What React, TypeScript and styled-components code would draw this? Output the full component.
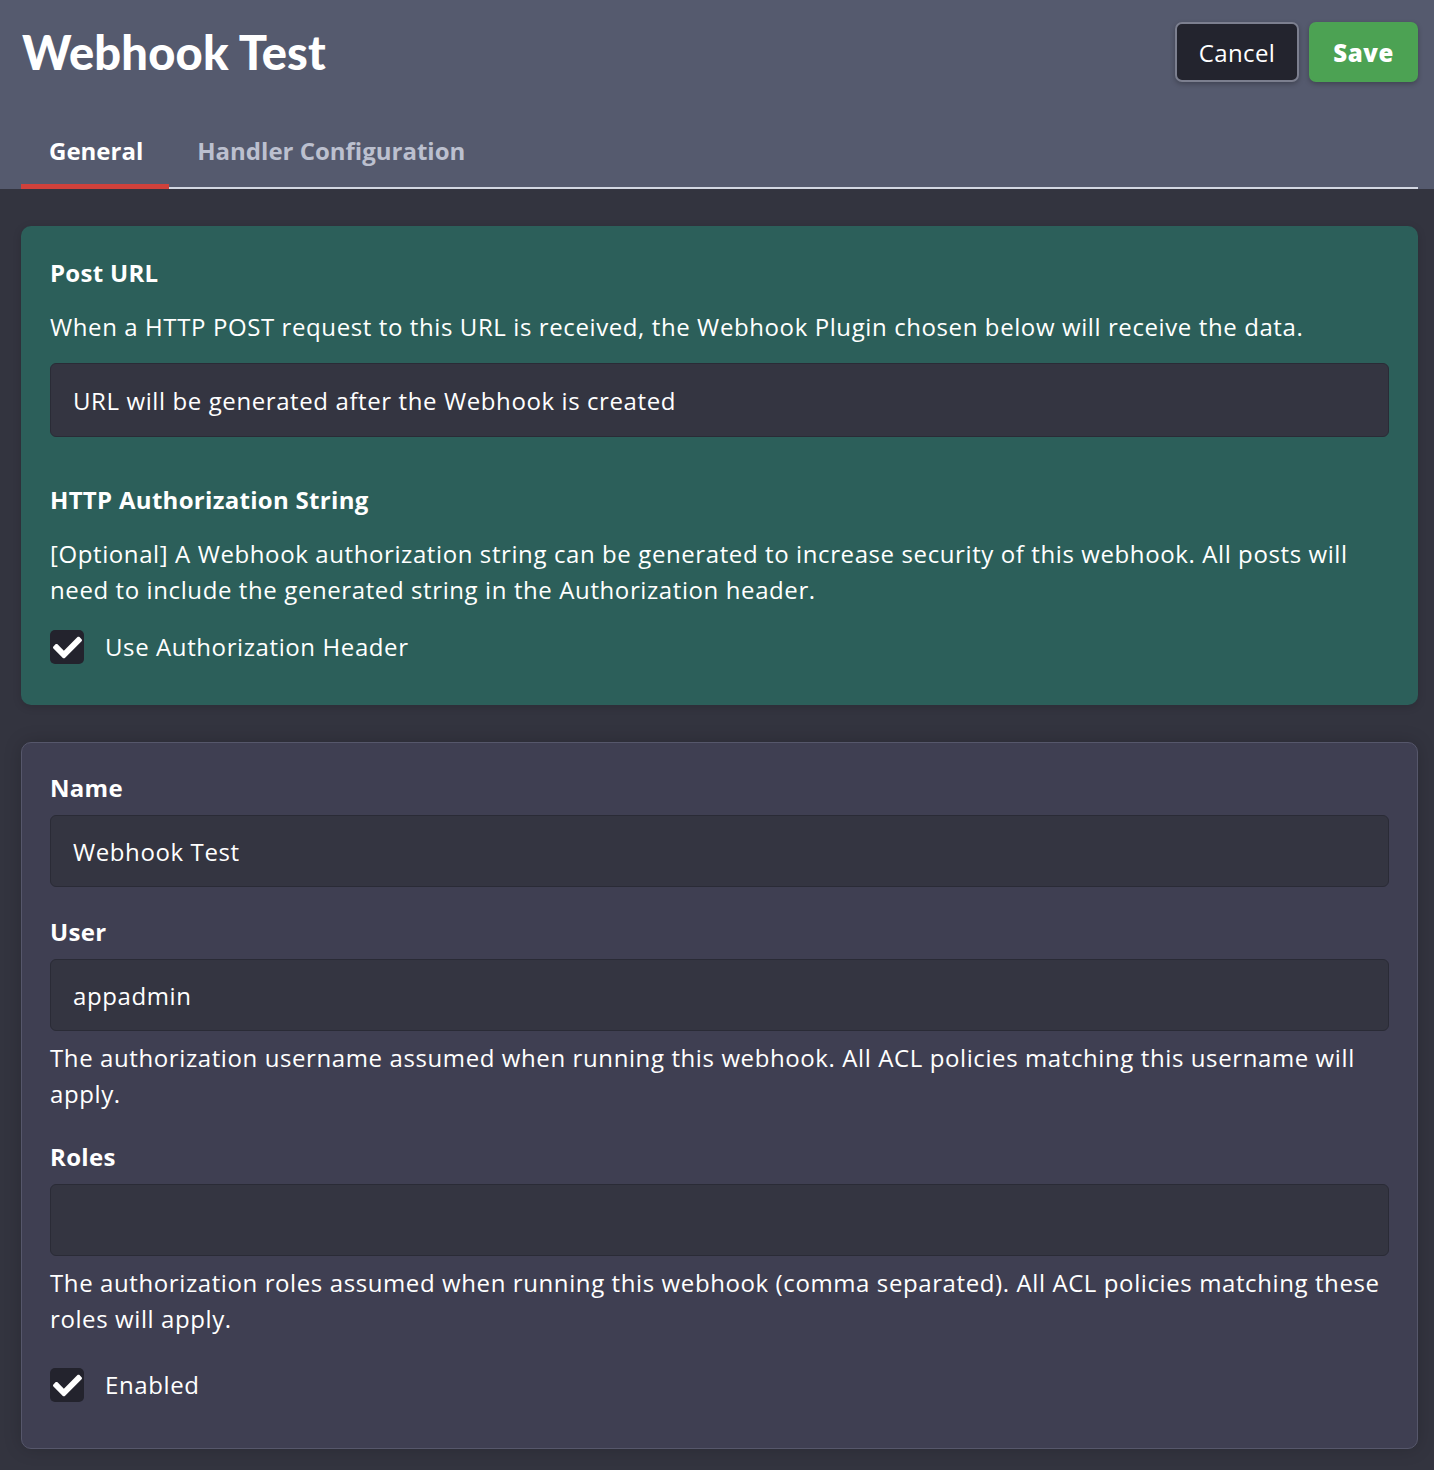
import React from "react";
import styled, { createGlobalStyle } from "styled-components";
import { FaCheck } from "react-icons/fa";

const Global = createGlobalStyle`
  html, body { margin: 0; padding: 0; background: #33343f; }
  body { font-family: "Open Sans", "Noto Sans", sans-serif; color: #ffffff; }
  * { box-sizing: border-box; }
`;

const Page = styled.div`
  min-height: 1470px;
  background: #33343f;
`;

const Header = styled.header`
  background: #555a6e;
  padding: 22px 16px 0 21px;
`;

const TitleRow = styled.div`
  display: flex;
  align-items: center;
  justify-content: space-between;
`;

const Title = styled.h1`
  margin: 0;
  font-family: "Lato", sans-serif;
  font-weight: 900;
  font-size: 47px;
  line-height: 60px;
  letter-spacing: 0.2px;
  padding-left: 1px;
`;

const Actions = styled.div`
  display: flex;
  gap: 10px;
`;

const Button = styled.button<{ $primary?: boolean }>`
  height: 60px;
  border-radius: 7px;
  font-family: "Open Sans", sans-serif;
  font-size: 24px;
  letter-spacing: ${(p) => (p.$primary ? "0.6px" : "0.4px")};
  color: #ffffff;
  cursor: pointer;
  padding: 0 22px;
  font-weight: ${(p) => (p.$primary ? 800 : 400)};
  background: ${(p) => (p.$primary ? "#4ca253" : "#23242e")};
  border: 2px solid ${(p) => (p.$primary ? "#4ca253" : "#7c7f8f")};
  box-shadow: 0 2px 5px rgba(0, 0, 0, 0.25);
`;

const TabList = styled.div`
  display: flex;
  margin-top: 32px;
  border-bottom: 2px solid #d3d7e2;
`;

const Tab = styled.div<{ $active?: boolean }>`
  padding: 19px 26px 15px 28px;
  margin-bottom: -2px;
  font-size: 24px;
  line-height: 36px;
  font-weight: 700;
  color: ${(p) => (p.$active ? "#ffffff" : "#bcc0cf")};
  border-bottom: 5px solid ${(p) => (p.$active ? "#d0413b" : "transparent")};
`;

const Body = styled.main`
  padding: 37px 16px 22px 21px;
  display: flex;
  flex-direction: column;
  gap: 37px;
`;

const InfoCard = styled.section`
  background: #2c5f5a;
  border-radius: 10px;
  padding: 29px 29px 40px 29px;
  box-shadow: 0 2px 8px rgba(0, 0, 0, 0.15);
`;

const FormCard = styled.section`
  background: #3f3f52;
  border: 1px solid #56576b;
  border-radius: 10px;
  padding: 27px 28px 45px 28px;
  box-shadow: 0 0 18px rgba(0, 0, 0, 0.18);
`;

const Heading = styled.h3<{ $gap?: number }>`
  margin: ${(p) => p.$gap ?? 0}px 0 0 0;
  font-size: 24px;
  line-height: 36px;
  font-weight: 700;
  letter-spacing: 0.3px;
`;

const Text = styled.p<{ $gap?: number }>`
  margin: ${(p) => p.$gap ?? 0}px 0 0 0;
  font-size: 24px;
  line-height: 36px;
  font-weight: 400;
  letter-spacing: 0.6px;
`;

const Field = styled.div<{ $gap?: number; $h?: number }>`
  margin-top: ${(p) => p.$gap ?? 9}px;
  height: ${(p) => p.$h ?? 72}px;
  background: #343541;
  border: 1px solid #2a2b36;
  border-radius: 6px;
  padding: 0 22px;
  display: flex;
  align-items: center;
  font-size: 24px;
  letter-spacing: 0.6px;
`;

const CheckRow = styled.label<{ $gap?: number }>`
  margin-top: ${(p) => p.$gap ?? 0}px;
  display: flex;
  align-items: center;
  gap: 21px;
  font-size: 24px;
  line-height: 36px;
  letter-spacing: 0.6px;
`;

const Box = styled.span`
  width: 34px;
  height: 34px;
  border-radius: 5px;
  background: #23232d;
  display: flex;
  align-items: center;
  justify-content: center;
  color: #ffffff;
`;

const Check = ({ label, gap }: { label: string; gap: number }) => (
  <CheckRow $gap={gap}>
    <Box>
      <FaCheck size={29} />
    </Box>
    {label}
  </CheckRow>
);

export default function App() {
  return (
    <Page>
      <Global />
      <Header>
        <TitleRow>
          <Title>Webhook Test</Title>
          <Actions>
            <Button>Cancel</Button>
            <Button $primary>Save</Button>
          </Actions>
        </TitleRow>
        <TabList>
          <Tab $active>General</Tab>
          <Tab>Handler Configuration</Tab>
        </TabList>
      </Header>
      <Body>
        <InfoCard>
          <Heading>Post URL</Heading>
          <Text $gap={18}>
            When a HTTP POST request to this URL is received, the Webhook Plugin chosen below will receive the data.
          </Text>
          <Field $gap={18} $h={74}>URL will be generated after the Webhook is created</Field>
          <Heading $gap={45}>HTTP Authorization String</Heading>
          <Text $gap={18}>
            [Optional] A Webhook authorization string can be generated to increase security of this webhook. All posts will need to include the generated string in the Authorization header.
          </Text>
          <Check label="Use Authorization Header" gap={21} />
        </InfoCard>
        <FormCard>
          <Heading>Name</Heading>
          <Field>Webhook Test</Field>
          <Heading $gap={27}>User</Heading>
          <Field>appadmin</Field>
          <Text $gap={9}>
            The authorization username assumed when running this webhook. All ACL policies matching this username will apply.
          </Text>
          <Heading $gap={27}>Roles</Heading>
          <Field />
          <Text $gap={9}>
            The authorization roles assumed when running this webhook (comma separated). All ACL policies matching these roles will apply.
          </Text>
          <Check label="Enabled" gap={30} />
        </FormCard>
      </Body>
    </Page>
  );
}
